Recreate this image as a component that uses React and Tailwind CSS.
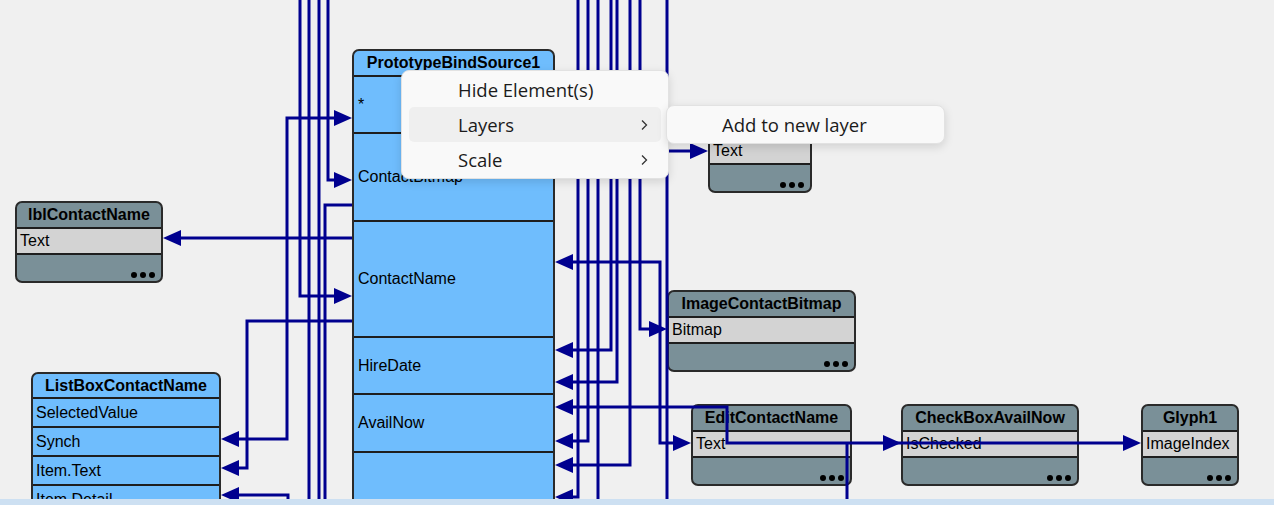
import React from "react";

const LINE = "#00008f";

// connector paths of the bindings diagram
const paths = [
  "M300,0 V296 H340",
  "M309,0 V499",
  "M319,0 V499",
  "M328,0 V180 H340",
  "M340,118 H287 V439 H233",
  "M352,205 H325 V499",
  "M352,238 H175",
  "M352,321 H247 V468 H233",
  "M233,495 H288 V499",
  "M578,0 V497 H567",
  "M588,0 V441 H567",
  "M598,0 V499",
  "M611,0 V350 H567",
  "M617,0 V382 H567",
  "M630,0 V465 H567",
  "M640,0 V329 H655",
  "M667,0 V499",
  "M567,262 H660 V443 H679",
  "M567,407 H727 V443 H1129",
  "M847,443 V499",
  "M667,151 H696",
];

const arrows = [
  [352, 296, "r"],
  [352, 180, "r"],
  [352, 118, "r"],
  [221, 439, "l"],
  [163, 238, "l"],
  [221, 468, "l"],
  [221, 495, "l"],
  [555, 497, "l"],
  [555, 441, "l"],
  [555, 350, "l"],
  [555, 382, "l"],
  [555, 465, "l"],
  [667, 329, "r"],
  [555, 262, "l"],
  [691, 443, "r"],
  [555, 407, "l"],
  [901, 443, "r"],
  [1141, 443, "r"],
  [708, 151, "r"],
];

const arrowPoints = (x, y, d) =>
  d === "r"
    ? `${x},${y} ${x - 18},${y - 8} ${x - 18},${y + 8}`
    : `${x},${y} ${x + 18},${y - 8} ${x + 18},${y + 8}`;

const Dots = () => (
  <div className="flex gap-[3px] pr-[6px] pb-[3px]">
    <span className="w-[6px] h-[6px] rounded-full bg-black" />
    <span className="w-[6px] h-[6px] rounded-full bg-black" />
    <span className="w-[6px] h-[6px] rounded-full bg-black" />
  </div>
);

// gray component node: title, one bound property, footer with dots
const GrayNode = ({ pos, title, row }) => (
  <div
    className={`absolute ${pos} h-[82px] flex flex-col rounded-[7px] border-2 border-[#2a2a2a] bg-[#7a9098] overflow-hidden text-[16px] text-black`}
  >
    <div className="h-[24px] flex items-center justify-center font-bold whitespace-nowrap">
      {title}
    </div>
    <div className="h-[28px] flex items-center px-[3px] bg-[#d3d3d3] border-y-2 border-[#1e1e1e]">
      {row}
    </div>
    <div className="flex-1 flex items-end justify-end">
      <Dots />
    </div>
  </div>
);

const Chevron = () => (
  <svg width="8" height="12" viewBox="0 0 8 12" className="text-[#333]">
    <path d="M2 1.5 L6.5 6 L2 10.5" fill="none" stroke="currentColor" strokeWidth="1.3" />
  </svg>
);

export default function App() {
  return (
    <div className="w-[1274px] h-[505px] flex flex-col bg-[#f0f0f0] font-['Liberation_Sans',Arial,sans-serif]">
      <div className="relative flex-1 overflow-hidden">
        {/* PrototypeBindSource1 */}
        <div className="absolute left-[352px] top-[49px] w-[203px] h-[500px] flex flex-col rounded-t-[7px] border-2 border-[#2a2a2a] bg-[#6fbdfd] text-[16px] text-black">
          <div className="h-[24px] flex items-center justify-center font-bold">
            PrototypeBindSource1
          </div>
          <div className="h-[57px] flex items-center px-[4px] border-t-2 border-[#1e1e1e]">*</div>
          <div className="h-[88px] flex items-center px-[4px] border-t-2 border-[#1e1e1e]">ContactBitmap</div>
          <div className="h-[116px] flex items-center px-[4px] border-t-2 border-[#1e1e1e]">ContactName</div>
          <div className="h-[57px] flex items-center px-[4px] border-t-2 border-[#1e1e1e]">HireDate</div>
          <div className="h-[58px] flex items-center px-[4px] border-t-2 border-[#1e1e1e]">AvailNow</div>
          <div className="flex-1 border-t-2 border-[#1e1e1e]" />
        </div>

        {/* ListBoxContactName */}
        <div className="absolute left-[31px] top-[372px] w-[190px] h-[160px] flex flex-col rounded-t-[7px] border-2 border-[#2a2a2a] bg-[#6fbdfd] text-[16px] text-black">
          <div className="h-[23px] flex items-center justify-center font-bold">
            ListBoxContactName
          </div>
          <div className="h-[29px] flex items-center px-[3px] border-t-2 border-[#1e1e1e]">SelectedValue</div>
          <div className="h-[29px] flex items-center px-[3px] border-t-2 border-[#1e1e1e]">Synch</div>
          <div className="h-[29px] flex items-center px-[3px] border-t-2 border-[#1e1e1e]">Item.Text</div>
          <div className="h-[29px] flex items-center px-[3px] border-t-2 border-[#1e1e1e]">Item.Detail</div>
        </div>

        <GrayNode pos="left-[15px] top-[201px] w-[148px]" title="lblContactName" row="Text" />
        <GrayNode pos="left-[708px] top-[111px] w-[104px]" title="" row="Text" />
        <GrayNode pos="left-[667px] top-[290px] w-[189px]" title="ImageContactBitmap" row="Bitmap" />
        <GrayNode pos="left-[691px] top-[404px] w-[161px]" title="EditContactName" row="Text" />
        <GrayNode pos="left-[901px] top-[404px] w-[178px]" title="CheckBoxAvailNow" row="IsChecked" />
        <GrayNode pos="left-[1141px] top-[404px] w-[98px]" title="Glyph1" row="ImageIndex" />

        {/* bindings */}
        <svg className="absolute inset-0 pointer-events-none" width="1274" height="499">
          {paths.map((d, i) => (
            <path key={i} d={d} fill="none" stroke={LINE} strokeWidth="3" />
          ))}
          {arrows.map(([x, y, d], i) => (
            <polygon key={i} points={arrowPoints(x, y, d)} fill={LINE} />
          ))}
        </svg>

        {/* context menu */}
        <div className="absolute left-[401px] top-[70px] w-[268px] py-[1px] rounded-[8px] border border-[#e2e2e2] bg-[#f9f9f9] shadow-[0_3px_10px_rgba(0,0,0,0.13)] font-['Open_Sans',sans-serif] text-[18.5px] text-[#1b1b1b]">
          <div className="h-[35px] mx-[7px] flex items-center pl-[49px]">Hide Element(s)</div>
          <div className="h-[35px] mx-[7px] flex items-center justify-between pl-[49px] pr-[13px] rounded-[5px] bg-[#efefef]">
            <span>Layers</span>
            <Chevron />
          </div>
          <div className="h-[35px] mx-[7px] flex items-center justify-between pl-[49px] pr-[13px]">
            <span>Scale</span>
            <Chevron />
          </div>
        </div>

        <div className="absolute left-[666px] top-[105px] w-[279px] h-[39px] flex items-center pl-[55px] rounded-[8px] border border-[#e2e2e2] bg-[#f9f9f9] shadow-[0_3px_10px_rgba(0,0,0,0.13)] font-['Open_Sans',sans-serif] text-[18.5px] text-[#1b1b1b]">
          Add to new layer
        </div>
      </div>
      <div className="h-[6px] bg-[#cde0f2]" />
    </div>
  );
}
